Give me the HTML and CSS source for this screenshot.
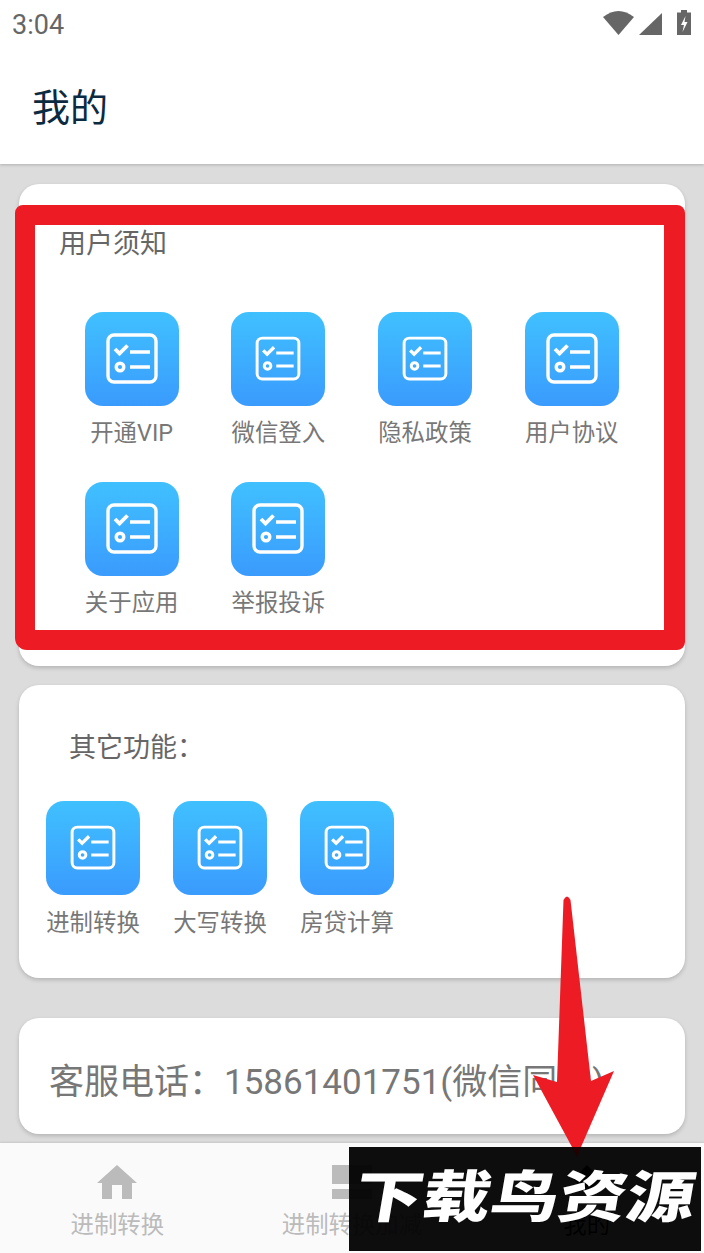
FILE: index.html
```html
<html lang="zh">
<head>
  <meta charset="UTF-8">
  <title>我的</title>
  <link rel="stylesheet" href="styles.css">
</head>
<body>
  <svg class="defs" width="0" height="0">
    <symbol id="list" viewBox="0 0 94 94">
      <rect x="23" y="23" width="48" height="47" rx="6" fill="none" stroke="#fff" stroke-width="3.4"/>
      <path d="M30 37l4.500 4.500 8-8" fill="none" stroke="#fff" stroke-width="3.800"/>
      <path d="M45 40h20M45 55h20" fill="none" stroke="#fff" stroke-width="3.400"/>
      <circle cx="35" cy="55" r="3.800" fill="none" stroke="#fff" stroke-width="3.400"/>
    </symbol>
  </svg>

  <div class="topbar">
    <div class="statusbar">
      <span class="time">3:04</span>
      <div class="status-icons">
        <svg class="wifi" width="31" height="25" viewBox="0 0 31 25"><path d="M0 7Q15.500-5 31 7L15.500 25Z" fill="#666"/></svg>
        <svg class="cell" width="23" height="22" viewBox="0 0 23 22"><path d="M23 0V22H0Z" fill="#666"/></svg>
        <svg class="battery" width="14" height="25" viewBox="0 0 14 25"><path d="M4 0h6v2.500h4V25H0V2.500h4z" fill="#666"/><path d="M8.500 6L4 15h3l-1.500 7L10.500 12H7.500z" fill="#fff"/></svg>
      </div>
    </div>
    <div class="header">我的</div>
  </div>

  <div class="content">
    <div class="card card-notice">
      <div class="notice-title">用户须知</div>
      <div class="notice-grid">
        <div class="item"><svg class="icon"><use href="#list"/></svg><span>开通VIP</span></div>
        <div class="item"><svg class="icon icon-small"><use href="#list"/></svg><span>微信登入</span></div>
        <div class="item"><svg class="icon icon-small"><use href="#list"/></svg><span>隐私政策</span></div>
        <div class="item"><svg class="icon"><use href="#list"/></svg><span>用户协议</span></div>
        <div class="item"><svg class="icon"><use href="#list"/></svg><span>关于应用</span></div>
        <div class="item"><svg class="icon"><use href="#list"/></svg><span>举报投诉</span></div>
      </div>
    </div>

    <div class="card card-other">
      <div class="other-title">其它功能：</div>
      <div class="other-row">
        <div class="item"><svg class="icon icon-small"><use href="#list"/></svg><span>进制转换</span></div>
        <div class="item"><svg class="icon icon-small"><use href="#list"/></svg><span>大写转换</span></div>
        <div class="item"><svg class="icon icon-small"><use href="#list"/></svg><span>房贷计算</span></div>
      </div>
    </div>

    <div class="card card-phone">客服电话：15861401751(微信同步)</div>
  </div>

  <div class="tabbar">
    <div class="tab">
      <svg width="40" height="34" viewBox="0 0 40 34"><path d="M20 0L40 18H35V34H25V20H15V34H5V18H0Z" fill="#bbb"/></svg>
      <span>进制转换</span>
    </div>
    <div class="tab">
      <svg width="40" height="34" viewBox="0 0 40 34"><path d="M0 0H40V19H0ZM0 24H40V34H0Z" fill="#bbb"/></svg>
      <span>进制转换加减</span>
    </div>
    <div class="tab tab-active">
      <svg width="40" height="34" viewBox="0 0 40 34"><path d="M20 0L34 14L20 28L6 14Z" fill="#111"/></svg>
      <span>我的</span>
    </div>
  </div>

  <!-- annotations on top of the screenshot -->
  <div class="red-frame"></div>
  <div class="watermark"><span>下载鸟资源</span></div>
  <svg class="arrow" width="704" height="1253" viewBox="0 0 704 1253">
    <path d="M563.500 900Q567 893 570.500 900L591 1081L614 1071L581 1147H572L533 1075L557 1082Z" fill="#ed1c24"/>
    <path d="M572 1147H581L577 1157Z" fill="#200"/>
  </svg>
</body>
</html>
```

FILE: styles.css
```css
html, body {
  margin: 0;
  padding: 0;
}
body {
  width: 704px;
  height: 1253px;
  overflow: hidden;
  position: relative;
  background: #dcdcdc;
  font-family: Roboto, "Noto Sans CJK SC", sans-serif;
  color: #666;
}
.defs {
  position: absolute;
}
.topbar {
  background: #fff;
  box-shadow: 0 1px 3px rgba(0,0,0,0.2);
}
.statusbar {
  height: 50px;
  box-sizing: border-box;
  display: flex;
  justify-content: space-between;
  align-items: center;
  padding: 0 13px 0 12px;
}
.time {
  font-size: 27px;
  color: #666;
}
.status-icons {
  display: flex;
  align-items: flex-end;
  padding-bottom: 5px;
}
.cell {
  margin-left: 5px;
}
.battery {
  margin-left: 15px;
}
.header {
  height: 114px;
  box-sizing: border-box;
  padding: 32px 32px 0;
  font-size: 38px;
  line-height: 52px;
  color: #0c2b40;
}
.content {
  padding: 20px 19px 0;
}
.card {
  background: #fff;
  border-radius: 20px;
  box-shadow: 0 2px 4px rgba(0,0,0,0.18);
}
.card-notice {
  height: 482px;
  box-sizing: border-box;
  padding: 42px 0 0 39.3px;
  margin-bottom: 19px;
}
.notice-title {
  font-size: 27px;
  line-height: 36px;
  padding-left: 0.7px;
  color: #666;
}
.notice-grid {
  display: grid;
  grid-template-columns: repeat(4, 146.7px);
  grid-auto-rows: 170px;
  margin-top: 50px;
}
.item {
  display: flex;
  flex-direction: column;
  align-items: center;
  font-size: 23.4px;
  line-height: 32px;
  color: #777;
}
.icon {
  width: 94px;
  height: 94px;
  border-radius: 18px;
  background: linear-gradient(#40c0ff, #3a9bfd);
  margin-bottom: 11px;
}
.icon-small use {
  transform: scale(0.87);
  transform-origin: 47px 47px;
}
.card-other {
  height: 293px;
  box-sizing: border-box;
  padding: 45px 0 0 27px;
  margin-bottom: 40px;
}
.other-title {
  font-size: 27px;
  line-height: 36px;
  padding-left: 23px;
  color: #666;
}
.other-row {
  display: flex;
  gap: 33px;
  margin-top: 35px;
}
.other-row .icon {
  margin-bottom: 12px;
}
.card-phone {
  height: 116px;
  box-sizing: border-box;
  padding: 40px 0 0 30px;
  font-size: 35px;
  line-height: 50px;
  color: #777;
  white-space: nowrap;
}
.tabbar {
  position: absolute;
  left: 0;
  right: 0;
  bottom: 0;
  height: 110px;
  background: #fafafa;
  box-shadow: 0 -1px 2px rgba(0,0,0,0.1);
  display: grid;
  grid-template-columns: repeat(3, 1fr);
}
.tab {
  display: flex;
  flex-direction: column;
  align-items: center;
  padding-top: 22px;
  font-size: 23.4px;
  line-height: 32px;
  color: #bbb;
  gap: 10px;
}
.tab-active {
  color: #111;
}
.red-frame {
  position: absolute;
  left: 15px;
  top: 205px;
  width: 629px;
  height: 405px;
  border: 20px solid #ed1c24;
  border-right-width: 21px;
  border-radius: 8px 8px 8px 12px;
}
.watermark {
  position: absolute;
  left: 349px;
  top: 1147px;
  width: 352px;
  height: 104px;
  background: rgba(0,0,0,0.95);
  color: #fff;
  font-size: 68px;
  font-weight: 900;
  line-height: 102px;
  text-align: center;
  white-space: nowrap;
}
.watermark span {
  display: block;
  transform: scale(1, 0.82) skewX(-8deg);
}
.arrow {
  position: absolute;
  left: 0;
  top: 0;
}
```
